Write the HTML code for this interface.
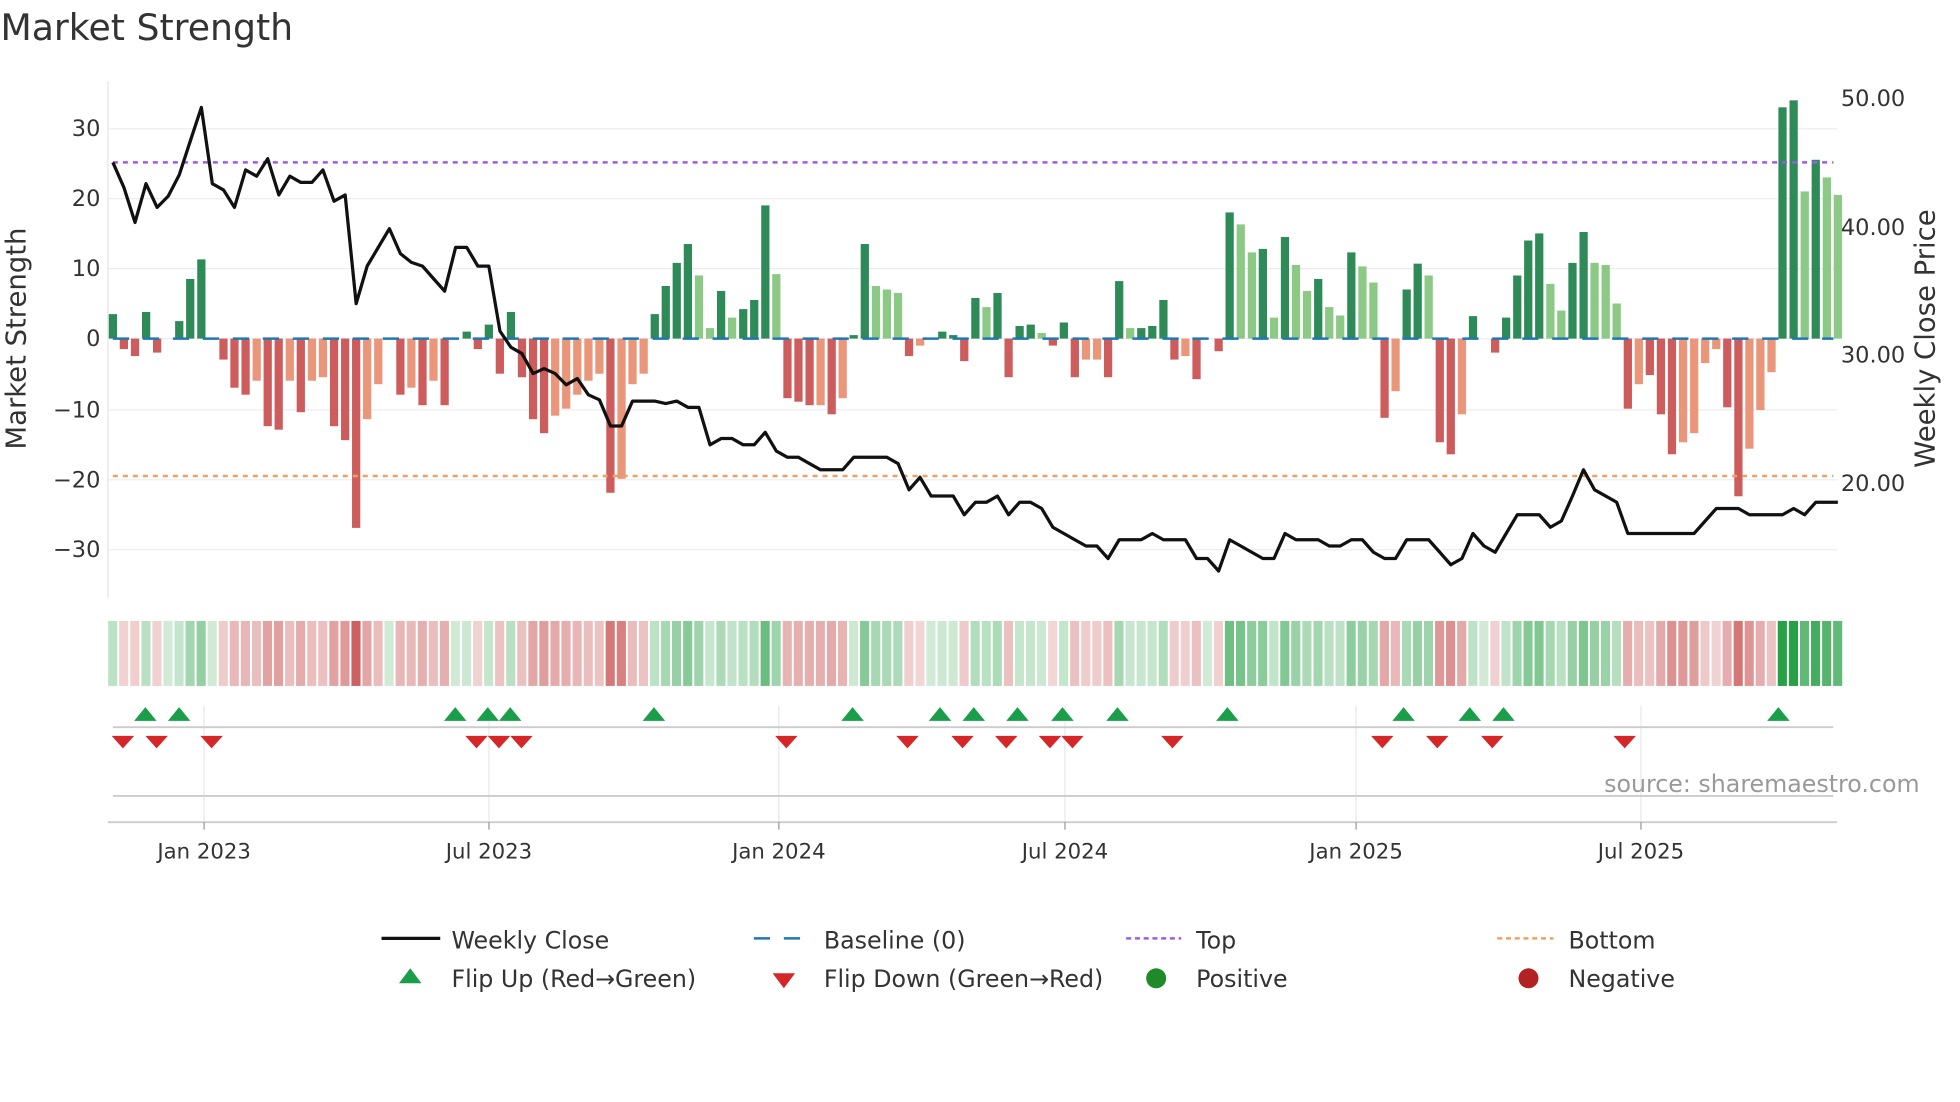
<!DOCTYPE html>
<html><head><meta charset="utf-8"><style>
html,body{margin:0;padding:0;background:#fff;}
svg{display:block;font-family:"DejaVu Sans","Liberation Sans",sans-serif;}
</style></head><body>
<svg id="s" width="1960" height="1102" viewBox="0 0 1568 882" xmlns="http://www.w3.org/2000/svg">
<rect width="1568" height="882" fill="#fff"/>
<text x="0" y="32" font-size="29" fill="#333">Market Strength</text>
<g id="grid" stroke="#ececf2" stroke-width="1">
<line x1="86" x2="1470" y1="103" y2="103"/><line x1="86" x2="1470" y1="159" y2="159"/><line x1="86" x2="1470" y1="215" y2="215"/><line x1="86" x2="1470" y1="271" y2="271"/><line x1="86" x2="1470" y1="328" y2="328"/><line x1="86" x2="1470" y1="384" y2="384"/><line x1="86" x2="1470" y1="440" y2="440"/>
</g>
<line x1="86" x2="86" y1="65" y2="478" stroke="#e6e6e6"/>
<g font-size="18" fill="#333" text-anchor="end">
<text x="80" y="109">30</text><text x="80" y="165">20</text><text x="80" y="221">10</text><text x="80" y="277">0</text><text x="80" y="334">−10</text><text x="80" y="390">−20</text><text x="80" y="446">−30</text>
</g>
<g font-size="18" fill="#333">
<text x="1473" y="85">50.00</text><text x="1473" y="188">40.00</text><text x="1473" y="290">30.00</text><text x="1473" y="393">20.00</text>
</g>
<text transform="translate(20,271) rotate(-90)" font-size="22" fill="#333" text-anchor="middle">Market Strength</text>
<text transform="translate(1548,271) rotate(-90)" font-size="22" fill="#333" text-anchor="middle">Weekly Close Price</text>
<g id="bars"></g>
<line x1="90" x2="1467" y1="271" y2="271" stroke="#1f77b4" stroke-width="2" stroke-dasharray="13 11"/>
<line x1="90" x2="1467" y1="130" y2="130" stroke="#9b5de5" stroke-width="2" stroke-dasharray="4 4"/>
<line x1="90" x2="1467" y1="381" y2="381" stroke="#f0a060" stroke-width="2" stroke-dasharray="4 4"/>
<polyline id="price" fill="none" stroke="#111" stroke-width="2.6" stroke-linejoin="round"/>
<g id="heat"></g>
<g stroke="#e8e8e8"><line x1="163" x2="163" y1="565" y2="658"/><line x1="391" x2="391" y1="565" y2="658"/><line x1="623" x2="623" y1="565" y2="658"/><line x1="852" x2="852" y1="565" y2="658"/><line x1="1085" x2="1085" y1="565" y2="658"/><line x1="1313" x2="1313" y1="565" y2="658"/></g>
<line x1="90" x2="1467" y1="582" y2="582" stroke="#ccc" stroke-width="1.5"/>
<line x1="90" x2="1467" y1="637" y2="637" stroke="#ccc" stroke-width="1.5"/>
<line x1="86" x2="1470" y1="658" y2="658" stroke="#ccc" stroke-width="1.5"/>
<g stroke="#999"><line x1="163" x2="163" y1="658" y2="664"/><line x1="391" x2="391" y1="658" y2="664"/><line x1="623" x2="623" y1="658" y2="664"/><line x1="852" x2="852" y1="658" y2="664"/><line x1="1085" x2="1085" y1="658" y2="664"/><line x1="1313" x2="1313" y1="658" y2="664"/></g>
<g id="flips"></g>
<text x="1536" y="634" font-size="19" fill="#999" text-anchor="end">source: sharemaestro.com</text>
<g font-size="17" fill="#333" text-anchor="middle">
<text x="163" y="687">Jan 2023</text><text x="391" y="687">Jul 2023</text><text x="623" y="687">Jan 2024</text><text x="852" y="687">Jul 2024</text><text x="1085" y="687">Jan 2025</text><text x="1313" y="687">Jul 2025</text>
</g>
<g font-size="19" fill="#333">
<line x1="305" x2="352" y1="751" y2="751" stroke="#111" stroke-width="2.6"/><text x="361" y="759">Weekly Close</text>
<line x1="603" x2="645" y1="751" y2="751" stroke="#1f77b4" stroke-width="2" stroke-dasharray="13 11"/><text x="659" y="759">Baseline (0)</text>
<line x1="901" x2="945" y1="751" y2="751" stroke="#9b5de5" stroke-width="2" stroke-dasharray="4 3"/><text x="957" y="759">Top</text>
<line x1="1198" x2="1243" y1="751" y2="751" stroke="#f0a060" stroke-width="2" stroke-dasharray="4 3"/><text x="1255" y="759">Bottom</text>
<polygon points="319,787 337,787 328,775" fill="#1a9e4a"/><text x="361" y="790">Flip Up (Red→Green)</text>
<polygon points="618,779 636,779 627,791" fill="#d62728"/><text x="659" y="790">Flip Down (Green→Red)</text>
<circle cx="925" cy="783" r="8" fill="#1f8a2a"/><text x="957" y="790">Positive</text>
<circle cx="1223" cy="783" r="8" fill="#b22222"/><text x="1255" y="790">Negative</text>
</g>
</svg>
<script>
var V=[3.5,-1.5,-2.5,3.8,-2,0,2.5,8.5,11.3,0,-3,-7,-8,-6,-12.5,-13,-6,-10.5,-6,-5.5,-12.5,-14.5,-27,-11.5,-6.5,0,-8,-7,-9.5,-6,-9.5,0,1,-1.5,2,-5,3.8,-5.5,-11.5,-13.5,-11,-10,-8,-6,-5,-22,-20,-6.5,-5,3.5,7.5,10.8,13.5,9,1.5,6.8,3,4.2,5.5,19,9.2,-8.5,-9,-9.5,-9.5,-10.8,-8.5,0.5,13.5,7.5,7,6.5,-2.5,-1,0,1,0.5,-3.2,5.8,4.5,6.5,-5.5,1.8,2,0.8,-1,2.3,-5.5,-3,-3,-5.5,8.2,1.5,1.5,1.8,5.5,-3,-2.5,-5.8,0,-1.8,18,16.3,12.3,12.8,3,14.5,10.5,6.8,8.5,4.5,3.3,12.3,10.3,8,-11.3,-7.5,7,10.7,9,-14.8,-16.5,-10.8,3.2,0,-2,3,9,14,15,7.8,4,10.8,15.2,10.8,10.5,5,-10,-6.5,-5.2,-10.8,-16.5,-14.8,-13.5,-3.5,-1.5,-9.8,-22.5,-15.7,-10.2,-4.8,33,34,21,25.5,23,20.5];
var L="ddddd0ddd0"+"dddlddldll"+"dddll0dldl"+"d0dddddddd"+"llllldllld"+"dddlldlddd"+"ldddldl0dl"+"lldl0d0ddl"+"ddddldddll"+"ddlddddld0"+"ddlldldlld"+"lldlldlddl"+"ddld0ddddd"+"llddllldld"+"ddllllddll"+"lddldll";
var bars=document.getElementById('bars'),heat=document.getElementById('heat'),h='',hh='',pts='';
var P=[130,150,178,147,166,157,140,113,86,147,152,166,136,141,127,156,141,146,146,136,161,156,243,213,198,183,203,210,213,223,233,198,198,213,213,265,278,283,299,295,299,308,303,316,320,341,341,321,321,321,323,321,326,326,356,351,351,356,356,346,361,366,366,371,376,376,376,366,366,366,366,371,392,382,397,397,397,412,402,402,397,412,402,402,407,422,427,432,437,437,447,432,432,432,427,432,432,432,447,447,457,432,437,442,447,447,427,432,432,432,437,437,432,432,442,447,447,432,432,432,442,452,447,427,437,442,427,412,412,412,422,417,397,376,392,397,402,427,427,427,427,427,427,427,417,407,407,407,412,412,412,412,407,412,402,402,402];
for(var i=0;i<V.length;i++){var x=90+i*8.85,v=V[i];var y=271-v*5.61;
var light=(L[i]=='l');var c=v>=0?(light?'#8cc985':'#2e8b57'):(light?'#e9967a':'#cd5c5c');
if(Math.abs(v)>0.2)h+='<rect x="'+(x-3.3).toFixed(1)+'" y="'+Math.min(y,271).toFixed(1)+'" width="6.6" height="'+Math.abs(v*5.61).toFixed(1)+'" fill="'+c+'"/>';
var a=Math.min(1,0.22+Math.abs(v)/40);var hc=v>=0?'rgba(40,160,70,'+a.toFixed(2)+')':'rgba(200,80,80,'+a.toFixed(2)+')';
hh+='<rect x="'+(x-3.8).toFixed(1)+'" y="497" width="7.3" height="52" fill="'+hc+'"/>';
if(i<P.length)pts+=x.toFixed(1)+','+P[i]+' ';}
bars.innerHTML=h;heat.innerHTML=hh;document.getElementById('price').setAttribute('points',pts);
var U=[116,143,364,390,408,523,682,752,779,814,850,894,982,1123,1176,1203,1423],D=[98,125,169,381,399,417,629,726,770,805,840,858,938,1106,1150,1194,1300],f='';
U.forEach(function(x){f+='<polygon points="'+(x-9)+',577 '+(x+9)+',577 '+x+',566" fill="#1a9e4a"/>';});
D.forEach(function(x){f+='<polygon points="'+(x-9)+',589 '+(x+9)+',589 '+x+',599" fill="#d62728"/>';});
document.getElementById('flips').innerHTML=f;
</script>
</body></html>
